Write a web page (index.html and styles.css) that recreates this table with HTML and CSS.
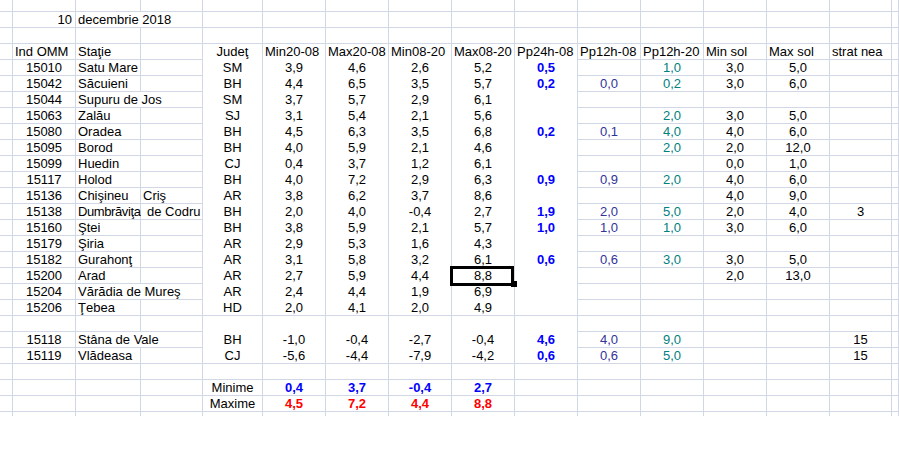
FILE: index.html
```html
<!DOCTYPE html>
<html lang="ro">
<head>
<meta charset="utf-8">
<title>Temperaturi 10 decembrie 2018</title>
<link rel="stylesheet" href="styles.css">
</head>
<body>
<div class="sheet">
  <div class="row top"><div></div><div></div><div></div><div></div><div></div><div></div><div></div><div></div><div></div><div></div><div></div><div></div><div></div><div></div><div></div><div></div></div>
  <div class="row"><div></div><div class="rt">10</div><div class="t"><span class="ov">decembrie 2018</span></div><div></div><div></div><div></div><div></div><div></div><div></div><div></div><div></div><div></div><div></div><div></div><div></div><div></div></div>
  <div class="row"><div></div><div></div><div></div><div></div><div></div><div></div><div></div><div></div><div></div><div></div><div></div><div></div><div></div><div></div><div></div><div></div></div>
  <div class="row w hdr"><div></div><div class="t">Ind OMM</div><div class="t">Staţie</div><div></div><div>Judeţ</div><div class="t">Min20-08</div><div class="t">Max20-08</div><div class="t">Min08-20</div><div class="t">Max08-20</div><div class="t">Pp24h-08</div><div class="t">Pp12h-08</div><div class="t">Pp12h-20</div><div class="t">Min sol</div><div class="t">Max sol</div><div class="t">strat nea</div><div></div></div>

  <div class="row w"><div></div><div>15010</div><div class="t">Satu Mare</div><div></div><div>SM</div><div>3,9</div><div>4,6</div><div>2,6</div><div>5,2</div><div class="b">0,5</div><div class="p"></div><div class="g">1,0</div><div>3,0</div><div>5,0</div><div></div><div></div></div>
  <div class="row w"><div></div><div>15042</div><div class="t">Săcuieni</div><div></div><div>BH</div><div>4,4</div><div>6,5</div><div>3,5</div><div>5,7</div><div class="b">0,2</div><div class="p">0,0</div><div class="g">0,2</div><div>3,0</div><div>6,0</div><div></div><div></div></div>
  <div class="row w"><div></div><div>15044</div><div class="t"><span class="ov">Supuru de Jos</span></div><div></div><div>SM</div><div>3,7</div><div>5,7</div><div>2,9</div><div>6,1</div><div class="b"></div><div class="p"></div><div class="g"></div><div></div><div></div><div></div><div></div></div>
  <div class="row w"><div></div><div>15063</div><div class="t">Zalău</div><div></div><div>SJ</div><div>3,1</div><div>5,4</div><div>2,1</div><div>5,6</div><div class="b"></div><div class="p"></div><div class="g">2,0</div><div>3,0</div><div>5,0</div><div></div><div></div></div>
  <div class="row w"><div></div><div>15080</div><div class="t">Oradea</div><div></div><div>BH</div><div>4,5</div><div>6,3</div><div>3,5</div><div>6,8</div><div class="b">0,2</div><div class="p">0,1</div><div class="g">4,0</div><div>4,0</div><div>6,0</div><div></div><div></div></div>
  <div class="row w"><div></div><div>15095</div><div class="t">Borod</div><div></div><div>BH</div><div>4,0</div><div>5,9</div><div>2,1</div><div>4,6</div><div class="b"></div><div class="p"></div><div class="g">2,0</div><div>2,0</div><div>12,0</div><div></div><div></div></div>
  <div class="row w"><div></div><div>15099</div><div class="t">Huedin</div><div></div><div>CJ</div><div>0,4</div><div>3,7</div><div>1,2</div><div>6,1</div><div class="b"></div><div class="p"></div><div class="g"></div><div>0,0</div><div>1,0</div><div></div><div></div></div>
  <div class="row w"><div></div><div>15117</div><div class="t">Holod</div><div></div><div>BH</div><div>4,0</div><div>7,2</div><div>2,9</div><div>6,3</div><div class="b">0,9</div><div class="p">0,9</div><div class="g">2,0</div><div>4,0</div><div>6,0</div><div></div><div></div></div>
  <div class="row w"><div></div><div>15136</div><div class="t">Chişineu</div><div class="t">Criş</div><div>AR</div><div>3,8</div><div>6,2</div><div>3,7</div><div>8,6</div><div class="b"></div><div class="p"></div><div class="g"></div><div>4,0</div><div>9,0</div><div></div><div></div></div>
  <div class="row w"><div></div><div>15138</div><div class="t"><span class="tight">Dumbrăviţa</span></div><div class="t lead">de Codru</div><div>BH</div><div>2,0</div><div>4,0</div><div>-0,4</div><div>2,7</div><div class="b">1,9</div><div class="p">2,0</div><div class="g">5,0</div><div>2,0</div><div>4,0</div><div>3</div><div></div></div>
  <div class="row w"><div></div><div>15160</div><div class="t">Ştei</div><div></div><div>BH</div><div>3,8</div><div>5,9</div><div>2,1</div><div>5,7</div><div class="b">1,0</div><div class="p">1,0</div><div class="g">1,0</div><div>3,0</div><div>6,0</div><div></div><div></div></div>
  <div class="row w"><div></div><div>15179</div><div class="t">Şiria</div><div></div><div>AR</div><div>2,9</div><div>5,3</div><div>1,6</div><div>4,3</div><div class="b"></div><div class="p"></div><div class="g"></div><div></div><div></div><div></div><div></div></div>
  <div class="row w"><div></div><div>15182</div><div class="t">Gurahonţ</div><div></div><div>AR</div><div>3,1</div><div>5,8</div><div>3,2</div><div>6,1</div><div class="b">0,6</div><div class="p">0,6</div><div class="g">3,0</div><div>3,0</div><div>5,0</div><div></div><div></div></div>
  <div class="row w"><div></div><div>15200</div><div class="t">Arad</div><div></div><div>AR</div><div>2,7</div><div>5,9</div><div>4,4</div><div class="sel">8,8</div><div class="b"></div><div class="p"></div><div class="g"></div><div>2,0</div><div>13,0</div><div></div><div></div></div>
  <div class="row w"><div></div><div>15204</div><div class="t"><span class="ov">Vărădia de Mureş</span></div><div></div><div>AR</div><div>2,4</div><div>4,4</div><div>1,9</div><div>6,9</div><div class="b"></div><div class="p"></div><div class="g"></div><div></div><div></div><div></div><div></div></div>
  <div class="row"><div></div><div>15206</div><div class="t">Ţebea</div><div></div><div>HD</div><div>2,0</div><div>4,1</div><div>2,0</div><div>4,9</div><div class="b"></div><div class="p"></div><div class="g"></div><div></div><div></div><div></div><div></div></div>

  <div class="row w"><div></div><div></div><div></div><div></div><div></div><div></div><div></div><div></div><div></div><div></div><div></div><div></div><div></div><div></div><div></div><div></div></div>
  <div class="row w"><div></div><div>15118</div><div class="t"><span class="ov">Stâna de Vale</span></div><div></div><div>BH</div><div>-1,0</div><div>-0,4</div><div>-2,7</div><div>-0,4</div><div class="b">4,6</div><div class="p">4,0</div><div class="g">9,0</div><div></div><div></div><div>15</div><div></div></div>
  <div class="row"><div></div><div>15119</div><div class="t">Vlădeasa</div><div></div><div>CJ</div><div>-5,6</div><div>-4,4</div><div>-7,9</div><div>-4,2</div><div class="b">0,6</div><div class="p">0,6</div><div class="g">5,0</div><div></div><div></div><div>15</div><div></div></div>
  <div class="row"><div></div><div></div><div></div><div></div><div></div><div></div><div></div><div></div><div></div><div></div><div></div><div></div><div></div><div></div><div></div><div></div></div>
  <div class="row"><div></div><div></div><div></div><div></div><div>Minime</div><div class="b">0,4</div><div class="b">3,7</div><div class="b">-0,4</div><div class="b">2,7</div><div></div><div></div><div></div><div></div><div></div><div></div><div></div></div>
  <div class="row"><div></div><div></div><div></div><div></div><div>Maxime</div><div class="r">4,5</div><div class="r">7,2</div><div class="r">4,4</div><div class="r">8,8</div><div></div><div></div><div></div><div></div><div></div><div></div><div></div></div>
  <div class="row stub"><div></div><div></div><div></div><div></div><div></div><div></div><div></div><div></div><div></div><div></div><div></div><div></div><div></div><div></div><div></div><div></div></div>
</div>
</body>
</html>
```

FILE: styles.css
```css
html, body {
  margin: 0;
  background: #ffffff;
}

body {
  font-family: "Liberation Sans", Arial, sans-serif;
  font-size: 13px;
  color: #000000;
}

.sheet {
  display: flex;
  flex-direction: column;
  width: 899px;
}

.row {
  display: grid;
  grid-template-columns: 13px 63px 65px 62px 60px repeat(9, 63px) 62px 1fr;
  height: 16px;
}

.row > div {
  border-right: 1px solid #d0d7e5;
  background: linear-gradient(to top, #d0d7e5 1px, #ffffff 1px);
  text-align: center;
  white-space: nowrap;
  line-height: 15px;
  padding: 0 2px;
  min-width: 0;
}

.row.top {
  height: 12px;
}

.row.stub {
  height: 4px;
}

.row.stub > div {
  background: #ffffff;
}

/* cells E..J of the data block are filled white: no horizontal rules */
.row.w > div:nth-child(n+5):nth-child(-n+10) {
  background: #ffffff;
}

.row > .t {
  text-align: left;
}

.row > .lead {
  padding-left: 6px;
}

.row > .rt {
  text-align: right;
  padding-right: 3px;
}

.ov {
  position: relative;
  z-index: 1;
  background: #ffffff;
}

.tight {
  letter-spacing: -0.4px;
}

.b {
  color: #0000ff;
  font-weight: bold;
}

.r {
  color: #ff0000;
  font-weight: bold;
}

.p {
  color: #333399;
}

.g {
  color: #008080;
}

.sel {
  position: relative;
}

.sel::after {
  content: "";
  position: absolute;
  left: -2px;
  top: -2px;
  right: 0;
  bottom: -2px;
  border: 3px solid #000000;
  z-index: 2;
}

.sel::before {
  content: "";
  position: absolute;
  left: 59px;
  top: 13px;
  width: 6px;
  height: 6px;
  background: #000000;
  z-index: 3;
}
```
